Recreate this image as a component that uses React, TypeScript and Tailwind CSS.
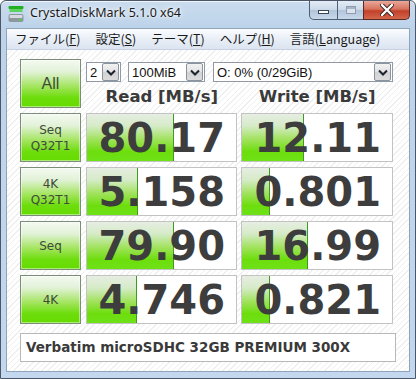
import React from 'react';

const rows = [
  { label: ['Seq', 'Q32T1'], read: '80.17', readBar: 87, write: '12.11', writeBar: 62 },
  { label: ['4K', 'Q32T1'], read: '5.158', readBar: 51, write: '0.801', writeBar: 28 },
  { label: ['Seq'], read: '79.90', readBar: 87, write: '16.99', writeBar: 66 },
  { label: ['4K'], read: '4.746', readBar: 50, write: '0.821', writeBar: 28 },
];

const menu = [
  { text: 'ファイル(', key: 'F' },
  { text: '設定(', key: 'S' },
  { text: 'テーマ(', key: 'T' },
  { text: 'ヘルプ(', key: 'H' },
  { text: '言語(', key: 'L', rest: 'anguage' },
];

const greenBtn =
  'border border-[#7b8d78] bg-[linear-gradient(to_bottom,#f4f9f1_0%,#e2f2d8_25%,#a6e563_55%,#6ddd0c_80%,#66dc02_100%)] shadow-[inset_0_0_0_1px_rgba(255,255,255,0.45)]';

function Chevron() {
  return (
    <svg width="10" height="7" viewBox="0 0 10 7">
      <polyline points="1,1.5 5,5.5 9,1.5" fill="none" stroke="#1d2430" strokeWidth="2" />
    </svg>
  );
}

function Combo({ text, className }: { text: string; className: string }) {
  return (
    <div className={`h-[20px] flex items-center bg-white border border-[#8f9aa6] ${className}`}>
      <span className="flex-1 pl-[3px] text-[13px] text-[#111] font-['Liberation_Sans',sans-serif] leading-none">{text}</span>
      <div className="w-[17px] h-[18px] mr-px flex items-center justify-center border border-[#8a949f] rounded-[2px] bg-[linear-gradient(to_bottom,#f2f2f2,#e2e2e2_50%,#d2d2d2_51%,#dcdcdc)]">
        <Chevron />
      </div>
    </div>
  );
}

function Cell({ value, bar }: { value: string; bar: number }) {
  return (
    <div className="relative h-[49px] bg-white border border-[#c3c3c3] flex items-center justify-end pr-[11px] overflow-hidden">
      <div
        className="absolute left-0 top-0 bottom-0 border-r border-[#3f9a1f] bg-[linear-gradient(to_bottom,#e6ede2_0%,#d6ebc8_25%,#9fe25a_55%,#6ddd0c_80%,#6ee218_100%)]"
        style={{ width: bar }}
      />
      <span className="relative text-[40px] leading-none font-bold text-[#3d3d3d] font-['DejaVu_Sans',sans-serif]">
        {value}
      </span>
    </div>
  );
}

export default function App() {
  return (
    <div className="w-[416px] h-[379px] bg-white overflow-hidden">
      <div className="w-full h-full flex flex-col rounded-t-[6px] border border-[#4c5666] bg-[linear-gradient(to_bottom,#cadcee_0px,#bcd3ea_28px,#c3d8ee_100%)] shadow-[inset_0_1px_0_rgba(255,255,255,0.7)]">
        {/* title bar */}
        <div className="h-[27px] flex items-start">
          <svg width="16" height="16" viewBox="0 0 16 16" className="ml-[7px] mt-[5px]">
            <rect x="0.5" y="0" width="15" height="3" rx="1" fill="#22b022" />
            <rect x="1.5" y="3" width="13" height="3" fill="#5fd35f" />
            <rect x="0.5" y="8" width="15" height="8" rx="2" fill="#8e969e" />
            <rect x="1.5" y="9" width="13" height="3" rx="1" fill="#d6dadf" />
            <rect x="11" y="13" width="3" height="1.5" fill="#4ad04a" />
          </svg>
          <span className="ml-[6px] mt-[6px] text-[12.5px] leading-none text-[#1a1a1a] font-['Noto_Sans',sans-serif] [text-shadow:0_0_6px_#fff,0_0_3px_#fff]">
            CrystalDiskMark 5.1.0 x64
          </span>
          <div className="ml-auto mr-[5px] flex h-[19px]">
            <div className="w-[29px] h-full border border-t-0 border-[#4f5f73] rounded-bl-[5px] bg-[linear-gradient(to_bottom,#e4edf7,#cbd8e7_50%,#b2c4da_51%,#c8d8ea)] flex items-center justify-center">
              <div className="w-[11px] h-[4px] mt-[4px] bg-white border border-[#3a4656]" />
            </div>
            <div className="w-[25px] h-full border-b border-[#4f5f73] bg-[linear-gradient(to_bottom,#e4edf7,#cbd8e7_50%,#b2c4da_51%,#c8d8ea)] flex items-center justify-center">
              <div className="w-[10px] h-[8px] border border-[#8e9db0] bg-[#dbe4ee] shadow-[inset_0_2px_0_#a7b5c6]" />
            </div>
            <div className="w-[47px] h-full border border-t-0 border-[#5a2a22] rounded-br-[5px] bg-[linear-gradient(to_bottom,#e9a798,#d7735e_45%,#c2402a_55%,#d2664b)] flex items-center justify-center">
              <svg width="14" height="12" viewBox="0 0 14 12">
                <path d="M2 1 L12 11 M12 1 L2 11" stroke="#3b2320" strokeWidth="4.2" strokeLinecap="round" />
                <path d="M2 1 L12 11 M12 1 L2 11" stroke="#ffffff" strokeWidth="2.4" strokeLinecap="round" />
              </svg>
            </div>
          </div>
        </div>

        {/* inner frame */}
        <div className="mx-[5px] border border-[#8fa3ba] flex flex-col">
          <div className="h-[21px] flex items-center gap-[15px] pl-[8px] border-b border-[#c7d3e2] bg-[linear-gradient(to_bottom,#fbfcfe,#e9eff7_50%,#dbe4f0)] text-[12.5px] text-[#1a1a1a] font-['Noto_Sans_CJK_JP',sans-serif] leading-none">
            {menu.map((m) => (
              <span key={m.key}>
                {m.text}
                <span className="underline">{m.key}</span>
                {m.rest}
                {')'}
              </span>
            ))}
          </div>

          <div className="h-[321px] px-[13px] pt-[9px] bg-[repeating-linear-gradient(135deg,#ffffff_0px,#ffffff_3px,#efefef_3px,#efefef_4px)]">
            <div className="grid grid-cols-[61px_152px_152px] gap-x-[4px] gap-y-[5px]">
              <div className={`h-[49px] flex items-center justify-center ${greenBtn}`}>
                <span className="text-[16px] text-[#3f4a3b] font-['Liberation_Sans',sans-serif]">All</span>
              </div>
              <div className="col-span-2 flex flex-col pl-px">
                <div className="mt-[3px] flex gap-[7px]">
                  <Combo text="2" className="w-[35px]" />
                  <Combo text="100MiB" className="w-[77px]" />
                  <Combo text="O: 0% (0/29GiB)" className="flex-1 ml-px" />
                </div>
                <div className="grid grid-cols-2 gap-x-[4px] h-[26px] items-center pt-[4px] text-[16.5px] font-bold text-[#3a3a3a] font-['DejaVu_Sans',sans-serif] leading-none">
                  <div className="text-center">Read [MB/s]</div>
                  <div className="text-center">Write [MB/s]</div>
                </div>
              </div>

              {rows.map((r) => (
                <React.Fragment key={r.label.join('-')}>
                  <div className={`h-[49px] flex flex-col items-center justify-center ${greenBtn}`}>
                    {r.label.map((l) => (
                      <span key={l} className="text-[12px] leading-[16px] text-[#3f4a3b] font-['DejaVu_Sans',sans-serif]">
                        {l}
                      </span>
                    ))}
                  </div>
                  <div className="pl-px">
                    <Cell value={r.read} bar={r.readBar} />
                  </div>
                  <Cell value={r.write} bar={r.writeBar} />
                </React.Fragment>
              ))}
            </div>

            <div className="mt-[9px] h-[29px] bg-white border border-[#b8b8b8] flex items-center pl-[5px] text-[13.5px] font-bold text-[#3a3a3a] font-['DejaVu_Sans',sans-serif]">
              Verbatim microSDHC 32GB PREMIUM 300X
            </div>
          </div>
        </div>
      </div>
    </div>
  );
}
